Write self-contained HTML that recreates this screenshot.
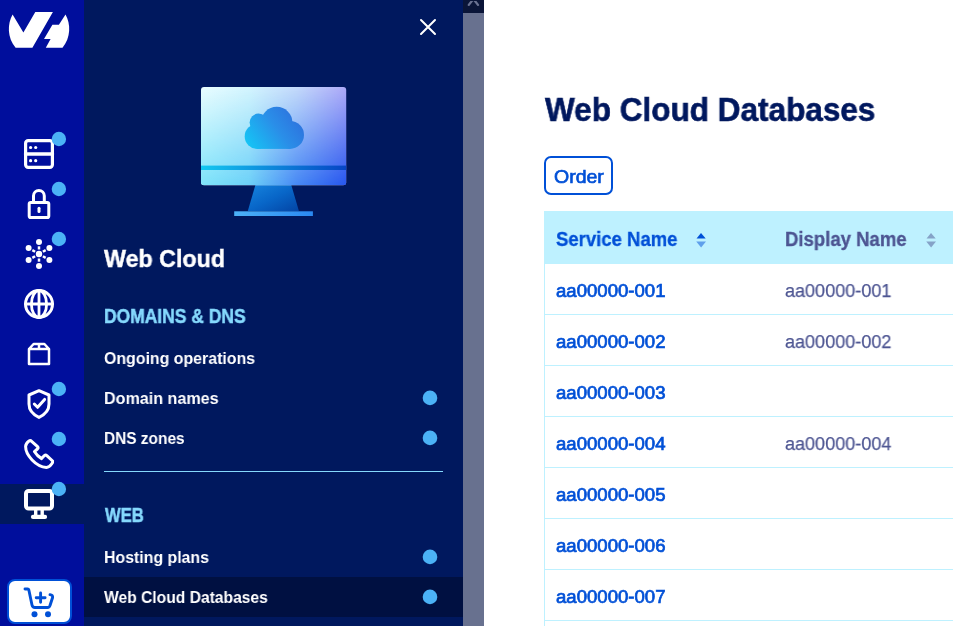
<!DOCTYPE html>
<html lang="en">
<head>
<meta charset="utf-8">
<title>Web Cloud Databases</title>
<style>
*{box-sizing:border-box;margin:0;padding:0}
html,body{width:953px;height:626px;overflow:hidden;background:#fff}
body{position:relative;font-family:"Liberation Sans",sans-serif;}
.t{will-change:transform;position:absolute;white-space:nowrap;line-height:1;transform-origin:0 0;font-weight:bold;display:block;text-decoration:none}
#rail{position:absolute;left:0;top:0;width:84px;height:626px;background:#000e9c}
#rail .act{position:absolute;left:0;top:484px;width:84px;height:40px;background:#00185e}
#rail svg.ic{position:absolute;left:24px;width:30px;height:30px;overflow:visible}
#cart{position:absolute;left:7px;top:579px;width:65px;height:45px;border:2px solid #0050d7;border-radius:8px;background:#fff}
#cart svg{position:absolute;left:15px;top:5.6px;width:30px;height:30px;overflow:visible}
#panel{position:absolute;left:84px;top:0;width:379px;height:626px;background:#00185e}
#panel .cur{position:absolute;left:0;top:577px;width:379px;height:40px;background:#001041}
#panel svg.pd{position:absolute;left:336.9px;width:18px;height:18px}
#panel hr{position:absolute;left:20px;top:471px;width:339px;height:1px;border:0;background:#85d9fd}
#strip{position:absolute;left:463px;top:0;width:21px;height:626px;background:#68718f}
#strip .top{position:absolute;left:0;top:0;width:21px;height:12.5px;background:#0a1538;overflow:hidden}
#main{position:absolute;left:484px;top:0;width:469px;height:626px;background:#fff}
#order{position:absolute;left:60px;top:156px;width:69px;height:39px;border:2px solid #0050d7;border-radius:7px;background:#fff}
#thead{position:absolute;left:60px;top:211px;width:409px;height:53px;background:#bef1ff}
.row{position:absolute;left:60px;width:409px;height:51px;border-left:1px solid #bef1ff;border-bottom:1px solid #bef1ff}
</style>
</head>
<body>
<nav id="rail">
<svg id="logo" style="position:absolute;left:0;top:0" width="84" height="60" viewBox="0 0 84 60">
<path fill="#fff" d="M12.6 14.6 L23.4 32.4 L35.3 12.1 L52.9 12.1 L32.4 47.8 L15.6 47.8 C7.2 38 7.2 24 12.6 14.6 Z"/>
<path fill="#fff" d="M65.5 14.6 L58.9 24.7 L52.4 24.7 L44 38.9 L50.6 38.9 L45.8 47.8 L62.5 47.8 C70.9 38 70.9 24 65.5 14.6 Z"/>
</svg>
<div class="act"></div>
<svg class="ic" style="top:139px" viewBox="0 0 30 30"><rect x="1.6" y="1.6" width="26.8" height="26.8" rx="2.6" stroke="#fff" fill="none" stroke-linecap="round" stroke-linejoin="round" stroke-width="3.2"/><path d="M1.6 15 H28.4" stroke="#fff" fill="none" stroke-linecap="round" stroke-linejoin="round" stroke-width="3.6"/><circle cx="6.6" cy="8.5" r="1.6" fill="#fff"/><circle cx="11.7" cy="8.5" r="1.6" fill="#fff"/><circle cx="6.6" cy="21.7" r="1.6" fill="#fff"/><circle cx="11.7" cy="21.7" r="1.6" fill="#fff"/></svg>
<svg class="ic" style="top:189px" viewBox="0 0 30 30"><rect x="5.2" y="13.4" width="19.6" height="15.2" rx="1.6" stroke="#fff" fill="none" stroke-linecap="round" stroke-linejoin="round" stroke-width="3"/><path d="M9.5 13 V6.8 a5.4 5.4 0 0 1 10.8 0 V13" stroke="#fff" fill="none" stroke-linecap="round" stroke-linejoin="round" stroke-width="3"/><path d="M15 19.3 v3.2" stroke="#fff" fill="none" stroke-linecap="round" stroke-linejoin="round" stroke-width="3"/></svg>
<svg class="ic" style="top:239px" viewBox="0 0 30 30"><circle cx="15.00" cy="3.00" r="3" fill="#fff"/><path d="M15.00 10.50 L15.00 7.30" stroke="#fff" stroke-width="2.5" stroke-linecap="butt"/><circle cx="4.61" cy="9.00" r="3" fill="#fff"/><path d="M11.10 12.75 L8.33 11.15" stroke="#fff" stroke-width="2.5" stroke-linecap="butt"/><circle cx="4.61" cy="21.00" r="3" fill="#fff"/><path d="M11.10 17.25 L8.33 18.85" stroke="#fff" stroke-width="2.5" stroke-linecap="butt"/><circle cx="15.00" cy="27.00" r="3" fill="#fff"/><path d="M15.00 19.50 L15.00 22.70" stroke="#fff" stroke-width="2.5" stroke-linecap="butt"/><circle cx="25.39" cy="21.00" r="3" fill="#fff"/><path d="M18.90 17.25 L21.67 18.85" stroke="#fff" stroke-width="2.5" stroke-linecap="butt"/><circle cx="25.39" cy="9.00" r="3" fill="#fff"/><path d="M18.90 12.75 L21.67 11.15" stroke="#fff" stroke-width="2.5" stroke-linecap="butt"/><circle cx="15" cy="15" r="3.2" fill="#fff"/></svg>
<svg class="ic" style="top:289px" viewBox="0 0 30 30"><circle cx="15" cy="15" r="13.5" stroke="#fff" fill="none" stroke-linecap="round" stroke-linejoin="round" stroke-width="3"/><ellipse cx="15" cy="15" rx="7.6" ry="13.5" stroke="#fff" fill="none" stroke-linecap="round" stroke-linejoin="round" stroke-width="2.8"/><path d="M1.5 15 H28.5 M15 1.5 V28.5" stroke="#fff" fill="none" stroke-linecap="round" stroke-linejoin="round" stroke-width="2.8"/></svg>
<svg class="ic" style="top:339px" viewBox="0 0 30 30"><path d="M5 10 L9.6 5 H20.4 L25 10 V25 H5 Z M5 10 H25 M15 5 V10" stroke="#fff" fill="none" stroke-linecap="round" stroke-linejoin="round" stroke-width="2.5"/></svg>
<svg class="ic" style="top:389px" viewBox="0 0 30 30"><path d="M15 1.7 L25 6 V15 C25 21.5 20 26 15 28.4 C10 26 5 21.5 5 15 V6 Z" stroke="#fff" fill="none" stroke-linecap="round" stroke-linejoin="round" stroke-width="3"/><path d="M10.3 15 L13.6 18.3 L20.6 10.4" stroke="#fff" fill="none" stroke-linecap="round" stroke-linejoin="round" stroke-width="3"/></svg>
<svg class="ic" style="top:439px" viewBox="0 0 30 30"><path d="M6.8 1.6 L13.6 7.6 Q14.6 8.8 13.4 10 L10.4 12.6 Q13 17 17.6 19.6 L20.4 16.6 Q21.6 15.6 22.8 16.6 L28.6 22 Q29 23.4 27.6 25 Q25.4 28.2 22.4 28.4 C12 28 1.6 16 1.6 7.6 Q1.6 4.4 5 2 Q6 1.2 6.8 1.6 Z" stroke="#fff" fill="none" stroke-linecap="round" stroke-linejoin="round" stroke-width="3"/></svg>
<svg class="ic" style="top:489px" viewBox="0 0 30 30"><rect x="2" y="2" width="26" height="17.5" rx="2.6" stroke="#fff" fill="none" stroke-linecap="round" stroke-linejoin="round" stroke-width="4"/><path d="M11.7 21 V26 M18.2 21 V26" stroke="#fff" fill="none" stroke-linecap="round" stroke-linejoin="round" stroke-width="3.4" stroke-linecap="butt"/><path d="M9 27.9 H21" stroke="#fff" fill="none" stroke-linecap="round" stroke-linejoin="round" stroke-width="4.2"/></svg><svg class="dots" style="position:absolute;left:0;top:0" width="84" height="626" viewBox="0 0 84 626"><circle cx="58.9" cy="139" r="7.2" fill="#4bb2f6"/><circle cx="58.9" cy="189" r="7.2" fill="#4bb2f6"/><circle cx="58.9" cy="239" r="7.2" fill="#4bb2f6"/><circle cx="58.9" cy="389" r="7.2" fill="#4bb2f6"/><circle cx="58.9" cy="439" r="7.2" fill="#4bb2f6"/><circle cx="58.9" cy="489" r="7.2" fill="#4bb2f6"/></svg><a id="cart"><svg viewBox="0 0 30 30"><path d="M1 2 H3.6 Q4.6 2 4.9 3.2 L8 18 Q8.5 20.5 11 20.5 H23.5 Q25.5 20.5 26 18.5 L28.6 10.5 Q29 8 26 7.6" stroke="#0050d7" fill="none" stroke-linecap="round" stroke-linejoin="round" stroke-width="2.9"/><path d="M12.2 10.7 H21.1 M16.6 6 V15.2" stroke="#0050d7" fill="none" stroke-linecap="round" stroke-linejoin="round" stroke-width="2.9"/><circle cx="10.5" cy="27.3" r="3" fill="#0050d7"/><circle cx="24" cy="27.3" r="3" fill="#0050d7"/></svg></a>
</nav>
<aside id="panel">
<svg style="position:absolute;left:335px;top:18px" width="18" height="18" viewBox="0 0 18 18"><path d="M2 2 L16 16 M16 2 L2 16" stroke="#fff" stroke-width="2" stroke-linecap="round"/></svg>
<svg style="position:absolute;left:111px;top:80px" width="160" height="140" viewBox="195 80 160 140">
<defs>
<linearGradient id="g1" x1="0" y1="0" x2="1" y2="0"><stop offset="0" stop-color="#eafdff"/><stop offset=".33" stop-color="#d4f5fe"/><stop offset=".66" stop-color="#c4dafb"/><stop offset="1" stop-color="#aeaaf8"/></linearGradient>
<linearGradient id="g2" x1="0" y1="0" x2="1" y2="0"><stop offset="0" stop-color="#7ee4fa"/><stop offset=".33" stop-color="#6cd0f8"/><stop offset=".66" stop-color="#4688f4"/><stop offset="1" stop-color="#2656ee"/></linearGradient>
<linearGradient id="gm" x1="0" y1="0" x2="0" y2="1"><stop offset="0" stop-color="#000"/><stop offset="1" stop-color="#fff"/></linearGradient>
<mask id="mk" maskUnits="userSpaceOnUse" x="195" y="80" width="160" height="140"><rect x="201" y="87" width="145.2" height="98.2" fill="url(#gm)"/></mask>
<linearGradient id="g3" x1="0" y1="0" x2="1" y2="0"><stop offset="0" stop-color="#14c8f0"/><stop offset="1" stop-color="#0644c4"/></linearGradient>
<linearGradient id="g4" x1="0" y1="0" x2="1" y2="1"><stop offset="0" stop-color="#1684de"/><stop offset=".5" stop-color="#0866c8"/><stop offset="1" stop-color="#0344a4"/></linearGradient>
<linearGradient id="g5" gradientUnits="userSpaceOnUse" x1="248" y1="150" x2="302" y2="112"><stop offset="0" stop-color="#14c8f6"/><stop offset=".55" stop-color="#2a8ee8"/><stop offset="1" stop-color="#2e6cdc"/></linearGradient>
<linearGradient id="g6" x1="0" y1="0" x2="1" y2="0"><stop offset="0" stop-color="#4cb2f8"/><stop offset="1" stop-color="#2a88f0"/></linearGradient>
<clipPath id="scr"><rect x="201" y="87" width="145.2" height="98.2" rx="3"/></clipPath>
</defs>
<path d="M255.4 185 H291.3 L298.9 211 H247.8 Z" fill="url(#g4)"/>
<rect x="234.2" y="211.3" width="78.7" height="4.7" fill="url(#g6)"/>
<rect x="201" y="87" width="145.2" height="98.2" rx="3" fill="url(#g1)"/>
<rect x="201" y="87" width="145.2" height="98.2" rx="3" fill="url(#g2)" mask="url(#mk)"/>
<rect x="201" y="165.6" width="145.2" height="4.4" fill="url(#g3)"/>
<g fill="url(#g5)"><circle cx="276.7" cy="122.5" r="15.7"/><circle cx="258.6" cy="122.6" r="9"/><circle cx="257.2" cy="136.4" r="12.5"/><circle cx="290" cy="134.9" r="14"/><rect x="257" y="126" width="33" height="22.9"/></g>
</svg>
<div class="cur"></div>
<h2 class="t" style="left:20.39px;top:246.56px;font-size:24.5px;font-weight:bold;color:#fff;transform:scaleX(0.9500);-webkit-text-stroke:0.4px #fff;">Web Cloud</h2>
<h3 class="t" style="left:20.23px;top:306.79px;font-size:19.5px;font-weight:bold;color:#85d9fd;transform:scaleX(0.8953);-webkit-text-stroke:0.5px #85d9fd;">DOMAINS &amp; DNS</h3>
<a class="t" style="left:20.00px;top:349.91px;font-size:17px;font-weight:bold;color:#fff;transform:scaleX(0.9353);">Ongoing operations</a>
<a class="t" style="left:19.99px;top:389.91px;font-size:17px;font-weight:bold;color:#fff;transform:scaleX(0.9474);">Domain names</a><svg class="pd" style="top:389px" viewBox="0 0 18 18"><circle cx="9" cy="8.9" r="7.3" fill="#4bb2f6"/></svg>
<a class="t" style="left:20.04px;top:429.91px;font-size:17px;font-weight:bold;color:#fff;transform:scaleX(0.9076);">DNS zones</a><svg class="pd" style="top:429px" viewBox="0 0 18 18"><circle cx="9" cy="8.9" r="7.3" fill="#4bb2f6"/></svg>
<hr>
<h3 class="t" style="left:20.91px;top:505.79px;font-size:19.5px;font-weight:bold;color:#85d9fd;transform:scaleX(0.8518);-webkit-text-stroke:0.5px #85d9fd;">WEB</h3>
<a class="t" style="left:20.11px;top:548.91px;font-size:17px;font-weight:bold;color:#fff;transform:scaleX(0.9336);">Hosting plans</a><svg class="pd" style="top:548px" viewBox="0 0 18 18"><circle cx="9" cy="8.9" r="7.3" fill="#4bb2f6"/></svg>
<a class="t" style="left:20.00px;top:588.91px;font-size:17px;font-weight:bold;color:#fff;transform:scaleX(0.9192);">Web Cloud Databases</a><svg class="pd" style="top:588px" viewBox="0 0 18 18"><circle cx="9" cy="8.9" r="7.3" fill="#4bb2f6"/></svg>
</aside>
<div id="strip"><div class="top"><svg width="21" height="13" viewBox="0 0 21 13"><path d="M5.8 3.9 L10.4 -2 L15 3.9" stroke="#6a7291" stroke-width="2.3" stroke-linecap="round" stroke-linejoin="miter" fill="none"/></svg></div></div>
<main id="main">
<h1 class="t" style="left:60.59px;top:93.37px;font-size:33px;font-weight:bold;color:#00185e;transform:scaleX(0.9550);-webkit-text-stroke:0.6px #00185e;">Web Cloud Databases</h1>
<div id="order"></div><a class="t" style="left:69.72px;top:167.22px;font-size:19px;font-weight:normal;color:#0050d7;transform:scaleX(1.0263);-webkit-text-stroke:0.65px #0050d7;">Order</a>
<div id="thead"><svg style="position:absolute;left:152px;top:21.5px" width="11" height="16" viewBox="0 0 11 16"><path d="M5 0 L9.7 5.4 H0.5 Z" fill="#0050d7"/><path d="M0.2 8.6 H10 L5.1 14.5 Z" fill="#5fa0eb"/></svg><svg style="position:absolute;left:382px;top:21.5px" width="11" height="16" viewBox="0 0 11 16"><path d="M5 0 L9.7 5.4 H0.5 Z" fill="#85a3c8"/><path d="M0.2 8.6 H10 L5.1 14.5 Z" fill="#85a3c8"/></svg></div>
<span class="t" style="left:71.65px;top:229.79px;font-size:19.5px;font-weight:bold;color:#0050d7;transform:scaleX(0.9495);-webkit-text-stroke:0.3px #0050d7;">Service Name</span><span class="t" style="left:300.78px;top:229.79px;font-size:19.5px;font-weight:bold;color:#4d5592;transform:scaleX(0.9511);-webkit-text-stroke:0.3px #4d5592;">Display Name</span>
<div class="row" style="top:264px"></div><div class="row" style="top:315px"></div><div class="row" style="top:366px"></div><div class="row" style="top:417px"></div><div class="row" style="top:468px"></div><div class="row" style="top:519px"></div><div class="row" style="top:570px"></div><div class="row" style="top:621px"></div>
<a class="t" style="left:72.38px;top:282.06px;font-size:18px;font-weight:normal;color:#0050d7;transform:scaleX(1.0321);-webkit-text-stroke:0.7px #0050d7;">aa00000-001</a><a class="t" style="left:72.38px;top:333.06px;font-size:18px;font-weight:normal;color:#0050d7;transform:scaleX(1.0321);-webkit-text-stroke:0.7px #0050d7;">aa00000-002</a><a class="t" style="left:72.38px;top:384.06px;font-size:18px;font-weight:normal;color:#0050d7;transform:scaleX(1.0321);-webkit-text-stroke:0.7px #0050d7;">aa00000-003</a><a class="t" style="left:72.38px;top:435.06px;font-size:18px;font-weight:normal;color:#0050d7;transform:scaleX(1.0321);-webkit-text-stroke:0.7px #0050d7;">aa00000-004</a><a class="t" style="left:72.38px;top:486.06px;font-size:18px;font-weight:normal;color:#0050d7;transform:scaleX(1.0321);-webkit-text-stroke:0.7px #0050d7;">aa00000-005</a><a class="t" style="left:72.38px;top:537.06px;font-size:18px;font-weight:normal;color:#0050d7;transform:scaleX(1.0321);-webkit-text-stroke:0.7px #0050d7;">aa00000-006</a><a class="t" style="left:72.38px;top:588.06px;font-size:18px;font-weight:normal;color:#0050d7;transform:scaleX(1.0321);-webkit-text-stroke:0.7px #0050d7;">aa00000-007</a><span class="t" style="left:301.36px;top:281.64px;font-size:18.5px;font-weight:normal;color:#4d5592;transform:scaleX(0.9753);-webkit-text-stroke:0.25px #4d5592;">aa00000-001</span><span class="t" style="left:301.36px;top:332.64px;font-size:18.5px;font-weight:normal;color:#4d5592;transform:scaleX(0.9753);-webkit-text-stroke:0.25px #4d5592;">aa00000-002</span><span class="t" style="left:301.36px;top:434.64px;font-size:18.5px;font-weight:normal;color:#4d5592;transform:scaleX(0.9753);-webkit-text-stroke:0.25px #4d5592;">aa00000-004</span>
</main>
</body>
</html>
